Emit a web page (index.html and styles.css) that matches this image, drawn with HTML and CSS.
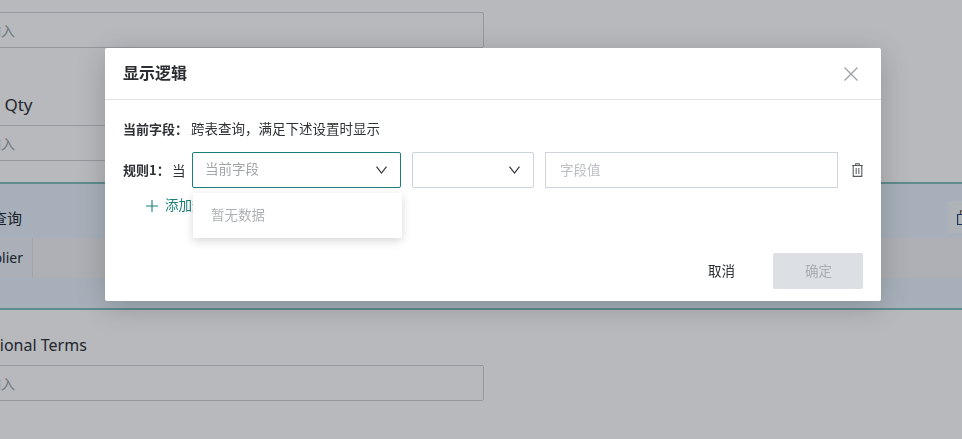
FILE: index.html
```html
<!DOCTYPE html>
<html lang="zh-CN">
<head>
<meta charset="utf-8">
<title>显示逻辑</title>
<link rel="stylesheet" href="styles.css">
</head>
<body>
<div class="page">
  <div class="form">
    <div class="input first"><span>请输入</span></div>
    <div class="label qty">Order Qty</div>
    <div class="input"><span>请输入</span></div>
    <section class="band">
      <div class="band-head">
        <div class="band-title">跨表查询</div>
        <div class="band-tool">
          <svg class="tool-icon" viewBox="0 0 16 16" width="16" height="16"><path d="M3.500 4.500V.8h6v3.700" fill="none" stroke="#6b5a4a" stroke-width="1.200"/><path d="M.6 4.500h13v10H.6z" fill="none" stroke="#24407a" stroke-width="1.200"/></svg>
        </div>
      </div>
      <div class="band-row"><div class="band-cell">Supplier</div></div>
    </section>
    <div class="label terms">Additional Terms</div>
    <div class="input"><span>请输入</span></div>
  </div>
</div>
<div class="mask"></div>
<div class="modal">
  <header class="modal-head">
    <h2 class="modal-title">显示逻辑</h2>
    <svg class="close" viewBox="0 0 14 14" width="14" height="14"><path d="M.5.500l13 13M13.500.500l-13 13" fill="none" stroke="#9b9ea3" stroke-width="1.200"/></svg>
  </header>
  <div class="modal-body">
    <p class="current"><b>当前字段&#xFF1A;</b>跨表查询&#xFF0C;满足下述设置时显示</p>
    <div class="rule">
      <b class="rule-name">规则1&#xFF1A;</b>
      <span class="rule-when">当</span>
      <div class="select active">
        <span class="placeholder">当前字段</span>
        <svg class="chev" viewBox="0 0 11 8" width="11" height="8"><path d="M.5.600L5.500 7l5-6.400" fill="none" stroke="#33373c" stroke-width="1.200"/></svg>
      </div>
      <div class="select op">
        <svg class="chev" viewBox="0 0 11 8" width="11" height="8"><path d="M.5.600L5.500 7l5-6.400" fill="none" stroke="#33373c" stroke-width="1.200"/></svg>
      </div>
      <div class="value">字段值</div>
      <svg class="trash" viewBox="0 0 11 14" width="11" height="14"><path d="M.2 2.500h10.600M3.700 2.300V.7h3.600v1.600M1.200 2.500v10.900h8.600V2.500" fill="none" stroke="#55595e" stroke-width="1.100"/><path d="M4.200 5v6M6.800 5v6" fill="none" stroke="#777b80" stroke-width="1.300"/></svg>
      <div class="dropdown">暂无数据</div>
    </div>
    <div class="add">
      <svg viewBox="0 0 12 12" width="12" height="12"><path d="M6 0v12M0 6h12" fill="none" stroke="#1a7f78" stroke-width="1.100"/></svg>
      <span>添加规则</span>
    </div>
  </div>
  <footer class="modal-foot">
    <span class="cancel">取消</span>
    <span class="ok">确定</span>
  </footer>
</div>
</body>
</html>
```

FILE: styles.css
```css
* { box-sizing: border-box; }
html, body { margin: 0; height: 100%; overflow: hidden; }
body {
  font-family: "Noto Sans CJK SC", "Liberation Sans", sans-serif;
  background: #fff;
  color: #23272c;
}
.page { height: 439px; overflow: hidden; }
.form { margin-left: -40px; padding-top: 12px; }
.input {
  width: 524px;
  height: 36px;
  border: 1px solid #cfd1d5;
  border-radius: 2px;
  padding-left: 12px;
  font-size: 14px;
  line-height: 35px;
  color: #9aa0a6;
}
.input.first { margin-bottom: 46px; }
.label {
  font-family: "Noto Sans", "Noto Sans CJK SC", sans-serif;
  font-size: 16px;
  line-height: 22px;
  color: #2b2e33;
  height: 22px;
  margin-bottom: 9px;
  white-space: nowrap;
}
.qty { margin-left: -12px; font-size: 17px; word-spacing: 5px; }
.terms { margin-bottom: 9px; }
.band {
  margin-top: 21px;
  height: 128px;
  width: 1100px;
  background: #e8f3fb;
  border-top: 2px solid #82bfbb;
  border-bottom: 2px solid #82bfbb;
  padding-top: 17px;
  margin-bottom: 24px;
}
.band-head { display: flex; justify-content: space-between; height: 37px; }
.band-title { font-size: 15px; line-height: 34px; padding-left: 2px; }
.band-tool {
  width: 60px;
  height: 32px;
  margin-right: 52px;
  background: #f3f6f8;
  padding: 9px 0 0 9px;
}
.tool-icon { display: block; }
.band-row { height: 40px; background: #f2f3f4; }
.band-cell {
  width: 73px;
  height: 40px;
  background: #eef2f8;
  border-right: 1px solid #dfe2e6;
  font-family: "Noto Sans", sans-serif;
  font-size: 14px;
  line-height: 40px;
  text-align: right;
  padding-right: 9px;
}
.mask {
  position: fixed;
  inset: 0;
  background: rgba(15, 22, 38, .3);
}
.modal {
  position: absolute;
  left: 105px;
  top: 48px;
  width: 776px;
  height: 253px;
  background: #fff;
  border-radius: 2px;
  box-shadow: 0 6px 30px rgba(0, 0, 0, .2);
  display: flex;
  flex-direction: column;
}
.modal-head {
  height: 52px;
  border-bottom: 1px solid #dfe1e4;
  display: flex;
  align-items: center;
  justify-content: space-between;
  padding: 0 23px 4px 18px;
}
.close { margin-top: 4px; }
.modal-title { margin: 0; font-size: 16px; font-weight: 700; color: #2a2d31; }
.modal-body { padding: 0 18px; }
.current {
  margin: 18px 0 0;
  font-size: 13.500px;
  line-height: 20px;
  height: 20px;
  color: #2e3136;
  white-space: nowrap;
}
.current b { font-weight: 700; font-size: 13px; margin-right: 3px; }
.rule {
  position: relative;
  display: flex;
  align-items: center;
  height: 36px;
  margin-top: 14px;
  font-size: 13px;
}
.rule-name { width: 49px; font-weight: 700; color: #2e3136; margin-top: -1px; white-space: nowrap; }
.rule-when { width: 20px; font-size: 13.500px; color: #2e3136; margin-top: -1px; }
.select {
  width: 209px;
  height: 36px;
  border: 1px solid #cfd4da;
  border-radius: 2px;
  display: flex;
  align-items: center;
  padding: 0 13px 0 12px;
  margin-right: 11px;
}
.select.active { border-color: #1a7f78; }
.select.op { width: 122px; }
.placeholder { font-size: 13.500px; color: #a2a6ab; margin-top: -5px; }
.chev { margin-left: auto; }
.value {
  width: 293px;
  height: 36px;
  border: 1px solid #cfd4da;
  padding-left: 14px;
  font-size: 13.500px;
  line-height: 32px;
  color: #bcbfc3;
}
.trash { margin-left: 13.500px; }
.dropdown {
  position: absolute;
  left: 70px;
  top: 41px;
  z-index: 2;
  width: 209px;
  height: 45px;
  padding-left: 18px;
  background: #fff;
  border-radius: 2px;
  box-shadow: 0 3px 10px rgba(0, 0, 0, .16);
  font-size: 13.500px;
  line-height: 42px;
  color: #aeb2b6;
}
.add {
  display: flex;
  align-items: center;
  gap: 7px;
  margin: 9px 0 0 23px;
  height: 18px;
  font-size: 13.500px;
  line-height: 15px;
  color: #1a7f78;
}
.add span { margin-top: -3px; }
.modal-foot {
  margin-top: auto;
  display: flex;
  align-items: center;
  justify-content: flex-end;
  padding: 0 18px 12px 0;
}
.cancel { font-size: 13.500px; color: #2a2d31; margin: -2px 38px 0 0; }
.ok {
  width: 90px;
  height: 36px;
  background: #dcdfe3;
  border-radius: 2px;
  text-align: center;
  font-size: 13.500px;
  line-height: 34px;
  color: #a9adb1;
  padding-left: 1px;
}
```
